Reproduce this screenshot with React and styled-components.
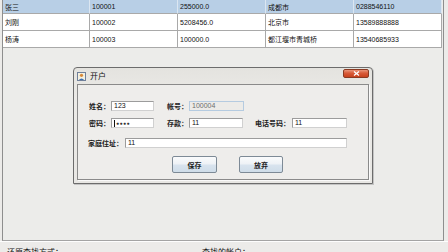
import React from "react";
import styled, { createGlobalStyle } from "styled-components";

const Global = createGlobalStyle`
  html, body { margin: 0; padding: 0; background: #ecebe9; }
  body { font-family: "Liberation Sans", "Noto Sans CJK SC", sans-serif; }
`;

const Screen = styled.div`
  position: relative;
  width: 448px;
  height: 252px;
  overflow: hidden;
  background: #ecebe9;
  display: flex;
  flex-direction: column;
`;

const Main = styled.div`
  height: 241px;
  flex-shrink: 0;
  margin: 0 4px 0 2px;
  border-left: 1px solid #8e8e8e;
  border-right: 1px solid #8e8e8e;
  border-bottom: 1px solid #a4a4a4;
  box-sizing: border-box;
  background: #ececea;
`;

const Table = styled.div`
  display: grid;
  grid-template-columns: 87px 88px 88px 88px 88px;
  font-size: 7px;
  color: #111;
`;

const Cell = styled.div`
  height: ${p => (p.$first ? 13 : 16)}px;
  display: flex;
  align-items: center;
  padding-left: 2px;
  box-sizing: content-box;
  background: ${p => (p.$sel ? "#b8cfe6" : "#fff")};
  border-right: 1px solid ${p => (p.$sel ? "#dbe6f1" : "#a9a9a9")};
  border-bottom: 1px solid #a9a9a9;
  white-space: nowrap;
`;

const Footer = styled.div`
  border-top: 1px solid #fdfdfd;
  display: flex;
  padding: 6px 0 0 7px;
  font-size: 8px;
  line-height: 10px;
  color: #111;
`;

const FooterItem = styled.span`
  width: ${p => p.$w}px;
`;

const Dialog = styled.div`
  position: absolute;
  left: 73px;
  top: 67px;
  width: 300px;
  height: 117px;
  box-sizing: border-box;
  border: 1px solid #6c6c6c;
  border-radius: 4px 4px 0 0;
  background: linear-gradient(180deg, #e4e3df 0%, #ecebe8 30%, #e8e7e4 100%);
  padding: 0 3px 3px 3px;
  display: flex;
  flex-direction: column;
  box-shadow: 1px 1px 0 #c4c4c4;
`;

const TitleBar = styled.div`
  height: 16px;
  display: flex;
  align-items: center;
  gap: 4px;
  font-size: 8px;
  color: #111;
`;

const TitleText = styled.span`
  font-family: "Noto Sans CJK SC", sans-serif;
  margin-top: -1px;
`;

const Close = styled.div`
  margin-left: auto;
  align-self: flex-start;
  margin-top: 1px;
  width: 26px;
  height: 9px;
  border: 1px solid #8a3a22;
  border-radius: 2px;
  box-sizing: border-box;
  background: linear-gradient(180deg, #e9957a 0%, #d85a38 45%, #c8421e 100%);
  display: flex;
  align-items: center;
  justify-content: center;
`;

const Panel = styled.div`
  flex: 1;
  border: 1px solid #8a8a8a;
  background: #eeedeb;
  box-shadow: 1px 1px 0 #fafafa;
  padding: 16px 0 0 11px;
  display: flex;
  flex-direction: column;
`;

const Row = styled.div`
  display: flex;
  align-items: center;
  margin-top: ${p => p.$mt || 0}px;
`;

const Label = styled.span`
  width: ${p => p.$w}px;
  margin-left: ${p => p.$ml || 0}px;
  font-family: "Noto Sans CJK SC", sans-serif;
  font-weight: 700;
  font-size: 7px;
  color: #222;
  white-space: nowrap;
`;

const Field = styled.div`
  width: ${p => p.$w}px;
  height: 10px;
  box-sizing: border-box;
  border: 1px solid ${p => (p.$disabled ? "#b5cbe0" : "#9c9c9c")};
  border-right-color: ${p => (p.$disabled ? "#b5cbe0" : "#d0d0d0")};
  border-bottom-color: ${p => (p.$disabled ? "#b5cbe0" : "#d0d0d0")};
  background: ${p => (p.$disabled ? "#ecebe8" : "#fff")};
  color: ${p => (p.$disabled ? "#6d6d6d" : "#111")};
  font-size: 7px;
  line-height: 8px;
  padding-left: 2px;
  display: flex;
  align-items: center;
`;

const Dots = styled.span`
  font-size: 5px;
  letter-spacing: 0.5px;
  color: #333;
`;

const Caret = styled.span`
  width: 1px;
  height: 7px;
  background: #111;
  margin-right: 1px;
`;

const Buttons = styled.div`
  display: flex;
  gap: 22px;
  margin-top: 8px;
  padding-left: 83px;
`;

const Button = styled.div`
  width: ${p => p.$w}px;
  height: 17px;
  box-sizing: border-box;
  border: 1px solid #7d8a96;
  border-radius: 2px;
  background: linear-gradient(180deg, #fafbfc 0%, #eef2f6 45%, #d8e3ee 55%, #cfdde9 100%);
  display: flex;
  align-items: center;
  justify-content: center;
  font-family: "Noto Sans CJK SC", sans-serif;
  font-weight: 700;
  font-size: 7px;
  color: #222;
`;

const rows = [
  ["张三", "100001", "255000.0", "成都市", "0288546110"],
  ["刘刚", "100002", "5208456.0", "北京市", "13589888888"],
  ["杨涛", "100003", "100000.0", "都江堰市青城桥", "13540685933"],
];

function AppIcon() {
  return (
    <svg width="9" height="9" viewBox="0 0 9 9">
      <rect x="0.5" y="0.5" width="8" height="8" fill="#f4f0e0" stroke="#6f7f9a" />
      <circle cx="4.5" cy="3.3" r="1.6" fill="#d88a3a" />
      <path d="M1.8 8 Q4.5 4.8 7.2 8 Z" fill="#3d6fb0" />
    </svg>
  );
}

export default function App() {
  return (
    <Screen>
      <Global />
      <Main>
        <Table>
          {rows.map((r, i) =>
            r.map((c, j) => (
              <Cell key={i + "-" + j} $sel={i === 0} $first={i === 0}>
                {c}
              </Cell>
            ))
          )}
        </Table>
      </Main>
      <Footer>
        <FooterItem $w={195}>还原查找方式：</FooterItem>
        <FooterItem $w={120}>查找的帐户：</FooterItem>
      </Footer>

      <Dialog>
        <TitleBar>
          <AppIcon />
          <TitleText>开户</TitleText>
          <Close>
            <svg width="7" height="5" viewBox="0 0 7 5">
              <path d="M1 0.5 L6 4.5 M6 0.5 L1 4.5" stroke="#fff" strokeWidth="1.3" />
            </svg>
          </Close>
        </TitleBar>
        <Panel>
          <Row>
            <Label $w={22}>姓名：</Label>
            <Field $w={43}>123</Field>
            <Label $w={22} $ml={13}>帐号：</Label>
            <Field $w={55} $disabled>100004</Field>
          </Row>
          <Row $mt={7}>
            <Label $w={22}>密码：</Label>
            <Field $w={43}>
              <Caret />
              <Dots>●●●●</Dots>
            </Field>
            <Label $w={22} $ml={13}>存款：</Label>
            <Field $w={54}>11</Field>
            <Label $w={37} $ml={12}>电话号码：</Label>
            <Field $w={55}>11</Field>
          </Row>
          <Row $mt={10}>
            <Label $w={37} $ml={-1}>家庭住址：</Label>
            <Field $w={222}>11</Field>
          </Row>
          <Buttons>
            <Button $w={45}>保存</Button>
            <Button $w={44}>放弃</Button>
          </Buttons>
        </Panel>
      </Dialog>
    </Screen>
  );
}
